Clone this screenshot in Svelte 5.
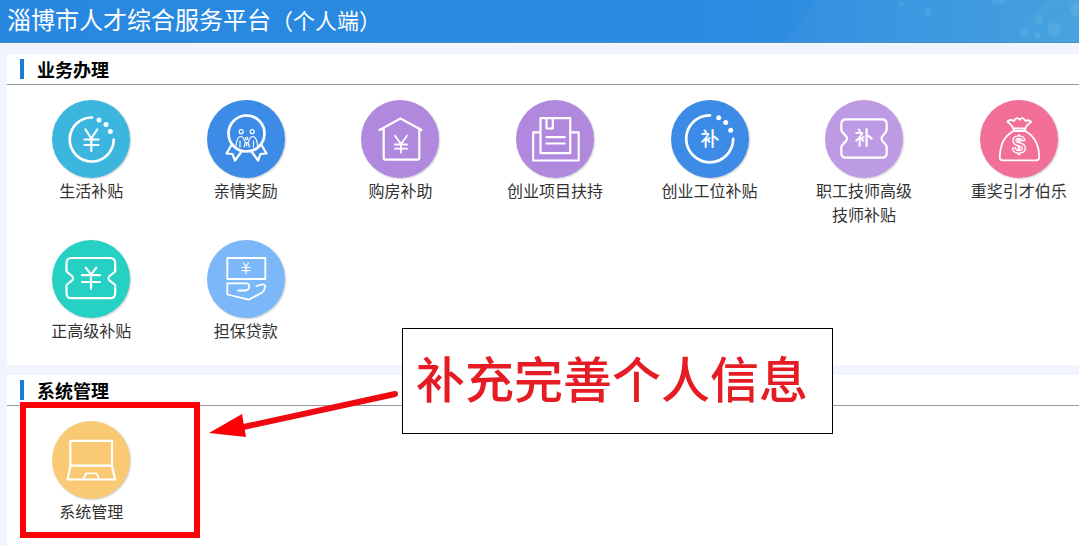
<script>
    const services = [
        { name: "生活补贴", icon: "ring-yen", tone: "cyan" },
        { name: "亲情奖励", icon: "medal", tone: "blue" },
        { name: "购房补助", icon: "house", tone: "purple" },
        { name: "创业项目扶持", icon: "book", tone: "purple" },
        { name: "创业工位补贴", icon: "ring-text", tone: "blue" },
        { name: "职工技师高级技师补贴", icon: "ticket-text", tone: "lilac" },
        { name: "重奖引才伯乐", icon: "bag", tone: "pink" },
        { name: "正高级补贴", icon: "ticket-yen", tone: "teal" },
        { name: "担保贷款", icon: "loan", tone: "sky" },
    ];
    const system = [{ name: "系统管理", icon: "laptop", tone: "orange" }];
</script>

{#snippet entry(item)}
    <a class="entry" href="#{item.icon}">
        <svg class="icon {item.tone}" viewBox="0 0 78 78" aria-hidden="true">
            {#if item.icon === "ring-yen"}
                <path class="bold" d="M40 17.5A22 22 0 1 0 61.7 39.5" />
                <g class="dots">
                    <circle cx="47" cy="20" r="2.5" />
                    <circle cx="54" cy="24.5" r="2.5" />
                    <circle cx="58.3" cy="31.5" r="2.5" />
                </g>
                <path d="M33.5 29.5L39.3 38.5L45.2 29.5M32.5 39.5H46.5M32.5 45H46.5M39.3 38.5V51" />
            {:else if item.icon === "medal"}
                <path d="M24.5 45L19.5 53.5L25.5 54L28 60.5L34.5 51.5M54.5 45L59.5 53.5L53.5 54L51 60.5L44.5 51.5" />
                <circle class="bold" cx="39.5" cy="33.5" r="18" />
                <g class="thin">
                    <circle cx="34.2" cy="31.7" r="2" />
                    <circle cx="45.2" cy="31.7" r="2" />
                    <circle cx="39.6" cy="38.5" r="1.2" />
                    <path d="M29 45.5C29.5 40 31 36.5 34 36.5C36.5 36.5 37 39.5 38 42M50.5 45.5C50 40 48.5 36.5 45.5 36.5C43 36.5 42.3 39.5 41.3 42M33 41V47M46.5 41V47M37 47L38.5 42.5H41L42.5 47M39.7 43V46" />
                </g>
            {:else if item.icon === "house"}
                <path d="M18.5 30L39.5 18.5L60.5 30M22.7 28.5V58Q22.7 59.7 24.5 59.7H56.5Q58.3 59.7 58.3 58V28.5" />
                <path class="mid" d="M34 35.7L40 44L46 35.7M34 44.5H46M34 48.7H46M40 44V52.7" />
            {:else if item.icon === "book"}
                <path d="M24.5 18.2H54.2V53.2H24.5ZM23 32.3H17.2V60.5H62.7V32.3H56M30.5 19V28.5H36.8V19M30.5 37.2H48.7M30.5 43.5H48.7" />
            {:else if item.icon === "ring-text"}
                <path class="bold" d="M39 15.3A23.5 23.5 0 1 0 62.2 38.8" />
                <g class="dots">
                    <circle cx="47.7" cy="17.7" r="2.5" />
                    <circle cx="54.7" cy="22.5" r="2.5" />
                    <circle cx="59.7" cy="30.3" r="2.5" />
                </g>
                <text x="39" y="46">补</text>
            {:else if item.icon === "ticket-text"}
                <path d="M21 19.3H57Q61.7 19.3 61.7 24V30C61.7 33 56.5 35 56.5 38.5C56.5 42 61.7 44 61.7 47V53Q61.7 57.7 57 57.7H21Q16.3 57.7 16.3 53V47C16.3 44 22 42 22 38.5C22 35 16.3 33 16.3 30V24Q16.3 19.3 21 19.3Z" />
                <text x="39" y="45">补</text>
            {:else if item.icon === "bag"}
                <path class="mid" d="M33.5 28.5C32 25.5 29.5 23.5 27.5 21.5C29.5 19.5 31.5 19.5 34 21C36 17.5 37.5 17.3 39.7 19.8C41.7 17.3 43.5 17.5 45.5 21C48 19.5 49.5 20 51.3 21.8C49 23.5 46 26 45.2 28.5ZM33.5 28.5V31C26 35 19.8 43 19.8 57.5Q19.8 60.3 23 60.3H56Q59.2 60.3 59.2 57.5C59.2 43 52.5 35 45.2 31V28.5M33.5 31H45.2" />
                <text class="coin" x="39" y="53">$</text>
            {:else if item.icon === "ticket-yen"}
                <path d="M19.5 18H58Q63.2 18 63.2 23V31.5L57 36.5Q55.7 38.3 57 40L63.2 45V53.2Q63.2 58.2 58 58.2H19.5Q14.5 58.2 14.5 53.2V45L20.5 40Q21.8 38.3 20.5 36.5L14.5 31.5V23Q14.5 18 19.5 18Z" />
                <path d="M33.7 27.7L39 34.7L44.3 27.7M30 35.2H48M30 42H48M39 35V49" />
            {:else if item.icon === "loan"}
                <path class="mid" d="M20.3 18H58.3V39H20.3Z" />
                <path class="thin" d="M36.5 23L39 26.5L41.5 23M35 27.5H43M35 30.7H43M39 27V34" />
                <path class="mid" d="M31 50.5H38.5C42.5 50.5 44 44 39.5 43.3H20.3V54.5L41.5 59.7L54.5 53Q56.5 52 57.3 49.5L58.3 46Q57 44 54.5 44.5L49.5 46" />
            {:else if item.icon === "laptop"}
                <path d="M18.3 19.8H60V44.7H18.3ZM18.3 45.5L15.5 58.5H63.2L60 45.5" />
                <path class="mid" d="M31.5 57.5L34 52.3H44.5L46.7 57.5" />
            {/if}
        </svg>
        <span class="name">{item.name}</span>
    </a>
{/snippet}

<header>
    <h1>淄博市人才综合服务平台<small>（个人端）</small></h1>
    <svg class="bubbles" viewBox="0 0 320 43" aria-hidden="true">
        <path d="M20 43L52 0H300L245 43Z" opacity=".04" />
        <path d="M290 0L250 43H320V0Z" opacity=".05" />
        <g opacity=".1">
            <circle cx="166" cy="12" r="4" />
            <circle cx="138" cy="4" r="3" />
            <circle cx="264" cy="33" r="4" />
            <circle cx="280" cy="20" r="4" />
            <circle cx="278" cy="36" r="3" />
            <circle cx="295" cy="30" r="7" />
            <circle cx="318" cy="10" r="7" />
            <circle cx="234" cy="2" r="3" />
            <circle cx="241" cy="0" r="4" />
        </g>
    </svg>
</header>

<main>
    <section>
        <h2>业务办理</h2>
        <nav class="grid">
            {#each services as item}
                {@render entry(item)}
            {/each}
        </nav>
    </section>
    <section>
        <h2>系统管理</h2>
        <nav class="grid">
            {#each system as item}
                {@render entry(item)}
            {/each}
        </nav>
        <div class="frame"></div>
        <svg class="arrow" viewBox="0 0 194 52" aria-hidden="true">
            <path d="M188 9L32 43" />
            <polygon points="2,48 35,29 39,52" />
        </svg>
        <p class="callout">补充完善个人信息</p>
    </section>
</main>

<style>
    :global(body) {
        background: #f0f4fd;
        font-family: "Liberation Sans", "Noto Sans CJK SC", sans-serif;
        overflow-x: hidden;
    }
    header {
        position: relative;
        height: 42px;
        border-bottom: 1px solid #4a8fc4;
        background: linear-gradient(90deg, #2887df 0%, #2b8be0 70%, #429fdd 100%);
        overflow: hidden;
    }
    h1 {
        margin: 0;
        padding-left: 7px;
        color: #fff;
        font-size: 24px;
        font-weight: 400;
        font-family: "Noto Sans CJK SC", sans-serif;
        line-height: 38px;
        white-space: nowrap;
    }
    small {
        font-size: 22px;
    }
    .bubbles {
        position: absolute;
        top: 0;
        right: 0;
        height: 42px;
        fill: #c8f0ff;
    }
    main {
        display: flex;
        flex-direction: column;
        gap: 10px;
        padding: 11px 0 0 7px;
    }
    section {
        position: relative;
        background: #fff;
    }
    h2 {
        display: flex;
        align-items: center;
        gap: 13px;
        height: 30px;
        margin: 0;
        padding-left: 13px;
        border-bottom: 1px solid #999;
        color: #000;
        font-size: 18px;
        font-weight: 700;
    }
    h2::before {
        content: "";
        width: 4px;
        height: 20px;
        background: #1b7cd8;
    }
    /* the last column runs a little past the right edge */
    .grid {
        display: grid;
        grid-template-columns: repeat(7, 1fr);
        row-gap: 12px;
        margin-right: -17px;
        padding: 15px 0 21px 7px;
    }
    .entry {
        display: flex;
        flex-direction: column;
        align-items: center;
        gap: 2px;
        color: #333;
        font-size: 16px;
        line-height: 24px;
        text-align: center;
        text-decoration: none;
    }
    .name {
        max-width: 100px;
    }
    .icon {
        width: 78px;
        height: 78px;
        border-radius: 50%;
        box-shadow: 1px 1px 2px rgba(0, 0, 0, 0.2);
        fill: none;
        stroke: #fff;
        stroke-width: 2.2;
        stroke-linecap: round;
        stroke-linejoin: round;
    }
    .icon .bold {
        stroke-width: 2.7;
    }
    .icon .mid {
        stroke-width: 1.8;
    }
    .icon .thin {
        stroke-width: 1.2;
    }
    .icon .dots {
        fill: #fff;
        stroke: none;
    }
    .icon text {
        fill: #fff;
        stroke: none;
        font-size: 19px;
        font-weight: 500;
        text-anchor: middle;
    }
    .icon .coin {
        fill: none;
        stroke: #fff;
        stroke-width: 1.2;
        font-size: 24px;
        font-weight: 700;
    }
    .cyan {
        background: #3cb6de;
    }
    .blue {
        background: #3c8be7;
    }
    .purple {
        background: #b088de;
    }
    .lilac {
        background: #bd9be4;
    }
    .pink {
        background: #f26f98;
    }
    .teal {
        background: #26d0c2;
    }
    .sky {
        background: #7cb7f9;
    }
    .orange {
        background: #f9c973;
    }
    .frame {
        position: absolute;
        top: 27px;
        left: 13px;
        box-sizing: border-box;
        width: 180px;
        height: 136px;
        border: 6px solid #fb0007;
    }
    .arrow {
        position: absolute;
        top: 10px;
        left: 200px;
        width: 194px;
        height: 52px;
        fill: #fb0007;
        stroke: #ee0a10;
        stroke-width: 6;
        stroke-linecap: round;
    }
    .arrow polygon {
        stroke: none;
    }
    .callout {
        position: absolute;
        top: -47px;
        left: 395px;
        box-sizing: border-box;
        margin: 0;
        padding: 0 24px 0 13px;
        border: 1px solid #000;
        background: #fff;
        color: #e51c23;
        font-size: 49px;
        font-weight: 500;
        line-height: 104px;
        white-space: nowrap;
    }
</style>
